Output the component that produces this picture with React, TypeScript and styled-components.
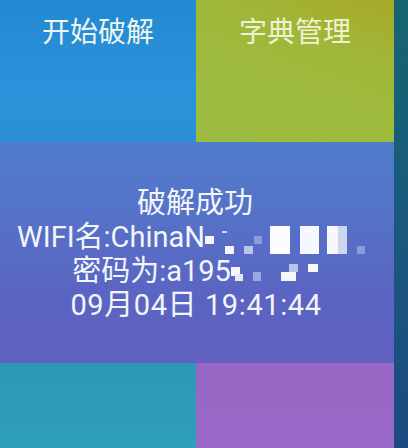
import styled, { createGlobalStyle } from "styled-components";

const GlobalStyle = createGlobalStyle`
  html, body {
    margin: 0;
    padding: 0;
    background: #1d5876;
  }
  * { box-sizing: border-box; }
`;

const Screen = styled.div`
  width: 408px;
  height: 448px;
  display: flex;
  overflow: hidden;
  font-family: Roboto, "Noto Sans CJK SC", sans-serif;
`;

const Main = styled.div`
  width: 394px;
  display: grid;
  grid-template-columns: 196px 198px;
  grid-template-rows: 142px 221px 85px;
`;

const Strip = styled.div`
  flex: 1;
  background: linear-gradient(180deg, #16656f 0%, #1a5a7c 45%, #1c4a80 100%);
`;

const Tile = styled.div<{ $bg: string; $ink?: string }>`
  background: ${(p) => p.$bg};
  color: ${(p) => p.$ink || "#eef6f0"};
  display: flex;
  justify-content: center;
  padding-top: 14px;
  font-size: 28px;
  line-height: 38px;
`;

const Panel = styled.div`
  grid-column: 1 / span 2;
  background: linear-gradient(180deg, #4f7ccb 0%, #5573c8 30%, #5b64c2 70%, #6261bf 100%);
  color: #f3f5fb;
  display: flex;
  flex-direction: column;
  align-items: center;
  padding-top: 44px;
  font-size: 29px;
  line-height: 34px;
`;

const Line = styled.div<{ $shift?: number; $spacing?: number }>`
  white-space: nowrap;
  display: flex;
  align-items: center;
  height: 34px;
  margin-left: ${(p) => p.$shift || 0}px;
  letter-spacing: ${(p) => p.$spacing || 0}px;
`;

const Mosaic = styled.span<{ $w: number }>`
  position: relative;
  display: inline-block;
  width: ${(p) => p.$w}px;
  height: 34px;
`;

const Block = styled.i<{ $x: number; $y: number; $w: number; $h: number; $c: string }>`
  position: absolute;
  left: ${(p) => p.$x}px;
  top: ${(p) => p.$y}px;
  width: ${(p) => p.$w}px;
  height: ${(p) => p.$h}px;
  background: ${(p) => p.$c};
`;

type B = [number, number, number, number, string];

const wifiBlocks: B[] = [
  [0, 16, 9, 8, "#f4f6fb"],
  [17, 11, 5, 2, "#c9d2ee"],
  [20, 26, 9, 8, "#f4f6fb"],
  [39, 26, 9, 8, "#b8c4ea"],
  [49, 16, 8, 8, "#8a9bdc"],
  [65, 6, 20, 28, "#fbfcff"],
  [95, 6, 19, 28, "#f6f8fe"],
  [122, 6, 11, 28, "#f6f8fd"],
  [133, 6, 9, 28, "#cdd5ef"],
  [152, 26, 8, 8, "#8d9bd8"],
];

const pwdBlocks: B[] = [
  [0, 13, 9, 9, "#f6f7fc"],
  [4, 20, 8, 7, "#e4e8f7"],
  [22, 18, 8, 9, "#9aa7e0"],
  [50, 18, 15, 9, "#f4f6fc"],
  [58, 10, 9, 8, "#b9c3ea"],
  [77, 10, 10, 8, "#f6f8fe"],
];

function renderBlocks(list: B[]) {
  return list.map(([x, y, w, h, c], i) => (
    <Block key={i} $x={x} $y={y} $w={w} $h={h} $c={c} />
  ));
}

export default function App() {
  return (
    <>
      <GlobalStyle />
      <Screen>
        <Main>
          <Tile $bg="linear-gradient(180deg, #2288d2 0%, #2a92da 60%, #2c8fd8 100%)">开始破解</Tile>
          <Tile
            $bg="linear-gradient(200deg, #a9a82a 0%, #9fb83a 35%, #9cbd42 100%)"
            $ink="#eef2cf"
          >
            字典管理
          </Tile>
          <Panel>
            <Line $shift={-4}>破解成功</Line>
            <Line $shift={-10}>
              WIFI名:ChinaN
              <Mosaic $w={162}>{renderBlocks(wifiBlocks)}</Mosaic>
            </Line>
            <Line $shift={-4}>
              密码为:a195
              <Mosaic $w={87}>{renderBlocks(pwdBlocks)}</Mosaic>
            </Line>
            <Line $shift={-2} $spacing={0.6}>09月04日 19:41:44</Line>
          </Panel>
          <Tile $bg="linear-gradient(180deg, #2e98b4 0%, #2e9fbc 100%)" />
          <Tile $bg="linear-gradient(180deg, #9866c4 0%, #9a68c8 100%)" />
        </Main>
        <Strip />
      </Screen>
    </>
  );
}
